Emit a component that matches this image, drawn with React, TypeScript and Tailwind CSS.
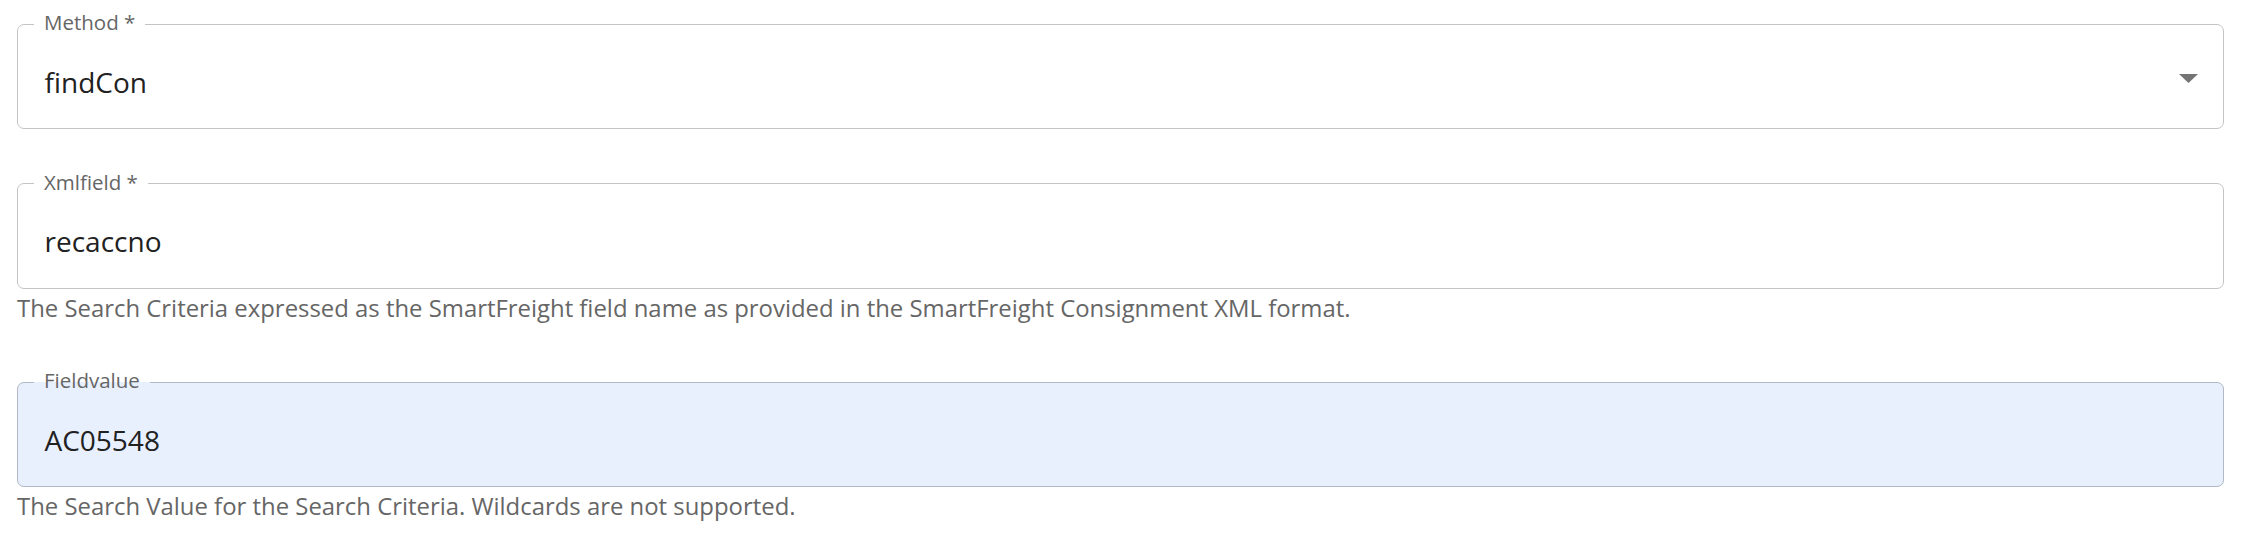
import React from "react";

function Field({
  label,
  value,
  helper,
  select,
  filled,
}: {
  label: string;
  value: string;
  helper?: string;
  select?: boolean;
  filled?: boolean;
}) {
  return (
    <div className="flex flex-col">
      <fieldset
        className={
          "border-[1.5px] rounded-[7px] " +
          (filled ? "border-[#b3b9c4] bg-[#e8f0fe]" : "border-[#c4c4c4] bg-white")
        }
      >
        <legend className="ml-[16px] px-[10px] pb-[4px] text-[20.5px] leading-[20px] text-[#666666]">
          {label}
        </legend>
        <div className="flex items-center justify-between pl-[26.5px] pr-[25.5px] pt-[28.5px] pb-[29.5px]">
          <div className="text-[28px] leading-[34px] text-[#212121]">{value}</div>
          {select && (
            <svg width="19" height="9" viewBox="0 0 19 9" className="block mb-[7px]">
              <path d="M0 0 L19 0 L9.5 9 Z" fill="#757575" />
            </svg>
          )}
        </div>
      </fieldset>
      {helper && (
        <div className="mt-[5px] text-[23.9px] leading-[28px] text-[#666666]">{helper}</div>
      )}
    </div>
  );
}

export default function App() {
  return (
    <div
      className="w-[2266px] h-[544px] bg-white pl-[17px] pr-[42px] pt-[12px] flex flex-col"
      style={{ fontFamily: "'Open Sans', 'Noto Sans', sans-serif" }}
    >
      <Field label="Method *" value="findCon" select />
      <div className="mt-[42.5px]">
        <Field
          label="Xmlfield *"
          value="recaccno"
          helper="The Search Criteria expressed as the SmartFreight field name as provided in the SmartFreight Consignment XML format."
        />
      </div>
      <div className="mt-[48.5px]">
        <Field
          label="Fieldvalue"
          value="AC05548"
          filled
          helper="The Search Value for the Search Criteria. Wildcards are not supported."
        />
      </div>
    </div>
  );
}
